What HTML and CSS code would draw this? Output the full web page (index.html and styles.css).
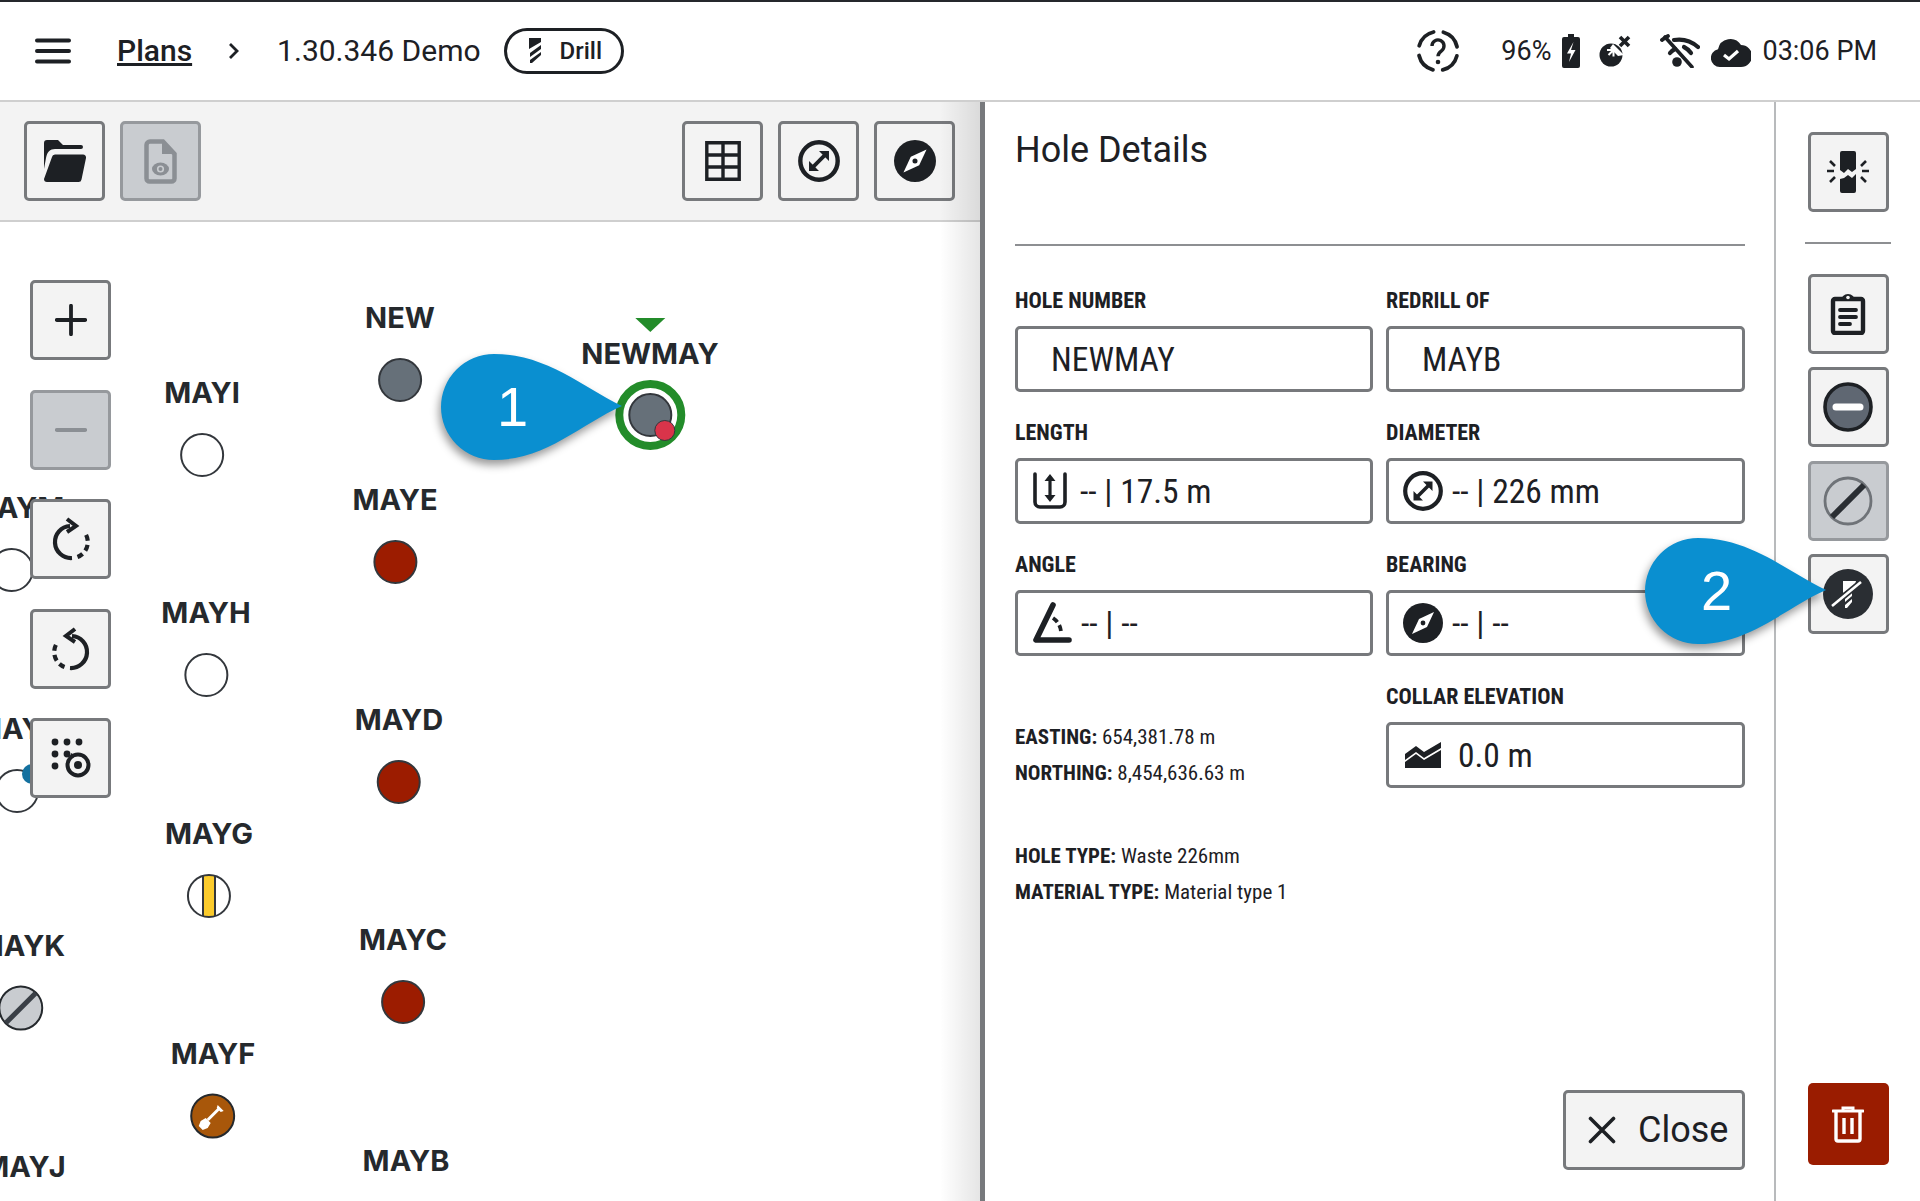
FILE: index.html
```html
<!DOCTYPE html>
<html lang="en">
<head>
    <meta charset="UTF-8">
    <meta name="viewport" content="width=device-width, initial-scale=1.0">
    <title>Hole Details</title>
    <link rel="stylesheet" href="styles.css">
</head>
<body>
    <svg class="defs" width="0" height="0">
        <symbol id="i-diameter" viewBox="0 0 40 40">
            <circle cx="20" cy="20" r="17.8" fill="none" stroke="currentColor" stroke-width="4.200"/>
            <path d="M13.5 26.5L26.5 13.5" stroke="currentColor" stroke-width="3.600" fill="none"/>
            <path d="M20 10.500h9.500V20zM20 29.500h-9.500V20z" fill="currentColor"/>
        </symbol>
        <symbol id="i-compass" viewBox="0 0 40 40">
            <circle cx="20" cy="20" r="20" fill="currentColor"/>
            <path d="M31 9L24 24L9 31L16 16z" fill="#fff"/>
            <circle cx="20" cy="20" r="2.400" fill="currentColor"/>
        </symbol>
    </svg>

    <header class="topbar">
        <svg class="menu-icon" viewBox="0 0 36 26"><path d="M2 2.500h32M2 13h32M2 23.500h32" stroke="#1d2024" stroke-width="4" stroke-linecap="round"/></svg>
        <a class="crumb-link">Plans</a>
        <svg class="crumb-sep" viewBox="0 0 12 18"><path d="M2 2l7 7-7 7" fill="none" stroke="#1d2024" stroke-width="2.800"/></svg>
        <span class="crumb-text">1.30.346 Demo</span>
        <span class="pill">
            <svg viewBox="0 0 16 28" width="16" height="28"><path d="M2 1h12v4L2 12zM14 8v4L3 20v-4zM14 15v3L5 26H3v-3z" fill="#1d2024"/></svg>
            Drill
        </span>
        <div class="status">
            <svg class="st-help" viewBox="0 0 44 44" width="44" height="44">
                <circle cx="22" cy="22" r="19.500" fill="none" stroke="#1d2024" stroke-width="3.800" stroke-dasharray="20.600 10" stroke-dashoffset="-5" stroke-linecap="round"/>
                <path d="M16 17a6 6 0 1 1 9.500 4.800c-2.300 1.600-3.500 2.700-3.500 5.500" fill="none" stroke="#1d2024" stroke-width="3.400"/>
                <circle cx="22" cy="33" r="2.300" fill="#1d2024"/>
            </svg>
            <span class="st-pct">96%</span>
            <svg class="st-batt" viewBox="0 0 18 34" width="18" height="34"><path d="M6 0h6v3h4a2 2 0 0 1 2 2v27a2 2 0 0 1-2 2H2a2 2 0 0 1-2-2V5a2 2 0 0 1 2-2h4z" fill="#1d2024"/><path d="M11.500 8L5 19.500h4L7 28l6.500-12H9z" fill="#fff"/></svg>
            <svg class="st-sat" viewBox="0 0 32 32" width="32" height="32">
                <circle cx="12" cy="20" r="11.500" fill="#1d2024"/>
                <path d="M14 9l11 11-6 1-8-8z" fill="#fff"/>
                <path d="M8 15h6.500v6.500M14.500 15l-5 5" fill="none" stroke="#fff" stroke-width="2"/>
                <path d="M21 2l9 9M30 2l-9 9" stroke="#1d2024" stroke-width="3.600"/>
            </svg>
            <svg class="st-wifi" viewBox="0 0 40 34" width="40" height="34">
                <path d="M14 6a29 29 0 0 1 24 7" fill="none" stroke="#1d2024" stroke-width="4.200" stroke-linecap="round"/>
                <path d="M24 13a19 19 0 0 1 7 6" fill="none" stroke="#1d2024" stroke-width="4.200" stroke-linecap="round"/>
                <path d="M10 19a15 15 0 0 1 5-4" fill="none" stroke="#1d2024" stroke-width="4.200" stroke-linecap="round"/>
                <path d="M2 6a30 30 0 0 1 6-4" fill="none" stroke="#1d2024" stroke-width="3.800" stroke-linecap="round"/>
                <path d="M5 3l27 30" fill="none" stroke="#1d2024" stroke-width="3.600" stroke-linecap="round"/>
                <circle cx="17" cy="28" r="4.800" fill="#1d2024"/>
            </svg>
            <svg class="st-cloud" viewBox="0 0 40 32" width="40" height="32">
                <path d="M9 32a9 9 0 0 1-2-17.800A12.500 12.500 0 0 1 30 10a11 11 0 0 1 0 22z" fill="#1d2024"/>
                <path d="M13 20l5 4 9-8" fill="none" stroke="#fff" stroke-width="3.200"/>
            </svg>
            <span class="st-time">03:06 PM</span>
        </div>
    </header>

    <main class="layout">
        <section class="plan-pane">
            <div class="toolbar">
                <button class="icon-btn">
                    <svg viewBox="0 0 42 44" width="42" height="44">
                        <path d="M0 4a3 3 0 0 1 3-3h11l5 5h18a2 2 0 0 1 0 4H11C6 10 3 13 2 19L0 30z" fill="#1d2024"/>
                        <path d="M8 18a3 3 0 0 1 3-2.500h28a3 3 0 0 1 3 3.500l-4.500 21.500a3 3 0 0 1-3 2.500H3a3 3 0 0 1-3-3z" fill="#1d2024"/>
                    </svg>
                </button>
                <button class="icon-btn is-disabled">
                    <svg viewBox="0 0 33 45" width="33" height="45">
                        <path d="M6 2.500h13L30.500 15v24.500a3 3 0 0 1-3 3H5.500a3 3 0 0 1-3-3V6a3.500 3.500 0 0 1 3.500-3.500z" fill="none" stroke="#8b8f94" stroke-width="4.500"/>
                        <path d="M18 2l13 13H18z" fill="#8b8f94"/>
                        <ellipse cx="16.500" cy="30" rx="8.500" ry="6.500" fill="#8b8f94"/>
                        <circle cx="16.500" cy="30" r="2.800" fill="none" stroke="#c9ccd0" stroke-width="1.600"/>
                    </svg>
                </button>
                <span class="toolbar-space"></span>
                <button class="icon-btn">
                    <svg viewBox="0 0 36 40" width="36" height="40"><path d="M1.800 1.800h32.400v36.400H1.800zM18 1.800v36.400M1.800 14h32.400M1.800 26h32.400" fill="none" stroke="#1d2024" stroke-width="3.400"/></svg>
                </button>
                <button class="icon-btn"><svg width="42" height="42"><use href="#i-diameter"/></svg></button>
                <button class="icon-btn"><svg width="42" height="42"><use href="#i-compass"/></svg></button>
            </div>

            <div class="map">
                <div class="hole" style="left:400px;top:79px"><span>NEW</span><i class="dot dot-grey"></i></div>
                <div class="hole" style="left:202px;top:154px"><span>MAYI</span><i class="dot"></i></div>
                <div class="hole" style="left:395px;top:261px"><span>MAYE</span><i class="dot dot-red"></i></div>
                <div class="hole" style="left:206px;top:374px"><span>MAYH</span><i class="dot"></i></div>
                <div class="hole" style="left:399px;top:481px"><span>MAYD</span><i class="dot dot-red"></i></div>
                <div class="hole" style="left:209px;top:595px">
                    <span>MAYG</span>
                    <i class="dot dot-stripe"></i>
                </div>
                <div class="hole" style="left:403px;top:701px"><span>MAYC</span><i class="dot dot-red"></i></div>
                <div class="hole" style="left:213px;top:815px">
                    <span>MAYF</span>
                    <svg class="dot-svg" viewBox="0 0 46 46" width="46" height="46">
                        <circle cx="23" cy="23" r="21.500" fill="#a8570a" stroke="#25292d" stroke-width="2"/>
                        <path d="M18 27l11-11" stroke="#fff" stroke-width="3"/>
                        <path d="M28 12l6 6-3 1-4-4zM11 28l5-3 5 5-3 5-5 2-4-4z" fill="#fff"/>
                    </svg>
                </div>
                <div class="hole" style="left:406px;top:922px"><span>MAYB</span></div>
                <div class="hole" style="left:21px;top:707px">
                    <span>MAYK</span>
                    <svg class="dot-svg" viewBox="0 0 46 46" width="46" height="46">
                        <circle cx="23" cy="23" r="21.500" fill="#c9ccd0" stroke="#25292d" stroke-width="2"/>
                        <path d="M8 38L38 8" stroke="#3a3f46" stroke-width="5"/>
                    </svg>
                </div>
                <div class="hole" style="left:24px;top:928px"><span>MAYJ</span></div>
                <div class="hole" style="left:12px;top:269px"><span class="label-shift">MAYM</span><i class="dot"></i></div>
                <div class="hole" style="left:17px;top:490px"><span>MAYL</span><i class="dot"></i></div>
                <i class="blue-dot" style="left:22px;top:542px"></i>

                <div class="hole hole-current" style="left:650px;top:115px">
                    <b class="heading-mark"></b>
                    <span>NEWMAY</span>
                    <i class="ring"><i class="dot dot-grey"></i><i class="alert-dot"></i></i>
                </div>

                <div class="map-controls">
                    <button class="icon-btn">
                        <svg viewBox="0 0 32 32" width="32" height="32"><path d="M1.800 16h28.400M16 1.800v28.400" stroke="#1d2024" stroke-width="3.800" stroke-linecap="round"/></svg>
                    </button>
                    <button class="icon-btn is-disabled">
                        <svg viewBox="0 0 32 32" width="32" height="32"><path d="M1.800 16h28.400" stroke="#8b8f94" stroke-width="3.800" stroke-linecap="round"/></svg>
                    </button>
                    <button class="icon-btn">
                        <svg viewBox="0 0 40 44" width="40" height="44">
                            <path d="M19 9A16 16 0 0 0 21 41" fill="none" stroke="#1d2024" stroke-width="4.200"/>
                            <path d="M26.500 40A16 16 0 0 0 34 16" fill="none" stroke="#1d2024" stroke-width="4.200" stroke-dasharray="6 4.200"/>
                            <path d="M16 2l9 7-9 6" fill="none" stroke="#1d2024" stroke-width="4"/>
                        </svg>
                    </button>
                    <button class="icon-btn">
                        <svg viewBox="0 0 40 44" width="40" height="44">
                            <path d="M21 9A16 16 0 0 1 19 41" fill="none" stroke="#1d2024" stroke-width="4.200"/>
                            <path d="M13.500 40A16 16 0 0 1 6 16" fill="none" stroke="#1d2024" stroke-width="4.200" stroke-dasharray="6 4.200"/>
                            <path d="M24 2l-9 7 9 6" fill="none" stroke="#1d2024" stroke-width="4"/>
                        </svg>
                    </button>
                    <button class="icon-btn">
                        <svg viewBox="0 0 40 40" width="40" height="40">
                            <g fill="#1d2024">
                                <circle cx="4" cy="4" r="3.400"/><circle cx="16" cy="4" r="3.400"/><circle cx="28" cy="4" r="3.400"/>
                                <circle cx="4" cy="16" r="3.400"/><circle cx="16" cy="16" r="3.400"/>
                                <circle cx="4" cy="28" r="3.400"/>
                            </g>
                            <circle cx="27" cy="27" r="10.500" fill="none" stroke="#1d2024" stroke-width="4"/>
                            <circle cx="27" cy="27" r="4" fill="#1d2024"/>
                            <path d="M20 15l5 3-6 3z" fill="#1d2024"/>
                        </svg>
                    </button>
                </div>
            </div>
        </section>

        <section class="details">
            <h1>Hole Details</h1>
            <div class="form-grid">
                <div class="field">
                    <label>HOLE NUMBER</label>
                    <div class="input input-plain">NEWMAY</div>
                </div>
                <div class="field">
                    <label>REDRILL OF</label>
                    <div class="input input-plain">MAYB</div>
                </div>
                <div class="field">
                    <label>LENGTH</label>
                    <div class="input">
                        <svg class="icon-length" viewBox="0 0 36 38" width="36" height="38">
                            <path d="M3 2v28a5 5 0 0 0 5 5h20a5 5 0 0 0 5-5V2" fill="none" stroke="#1d2024" stroke-width="3.600" stroke-linecap="round"/>
                            <path d="M18 7v18" stroke="#1d2024" stroke-width="3.200"/>
                            <path d="M18 2l5.500 7h-11zM18 30l5.500-7h-11z" fill="#1d2024"/>
                        </svg>
                        -- | 17.5 m
                    </div>
                </div>
                <div class="field">
                    <label>DIAMETER</label>
                    <div class="input"><svg width="40" height="40"><use href="#i-diameter"/></svg>-- | 226 mm</div>
                </div>
                <div class="field">
                    <label>ANGLE</label>
                    <div class="input">
                        <svg viewBox="0 0 40 42" width="40" height="42">
                            <path d="M21 3L4 38h33" fill="none" stroke="#1d2024" stroke-width="5.600" stroke-linecap="round" stroke-linejoin="round"/>
                            <path d="M21 16a18 18 0 0 1 8 16" fill="none" stroke="#1d2024" stroke-width="3.800" stroke-dasharray="6 3.500"/>
                        </svg>
                        -- | --
                    </div>
                </div>
                <div class="field">
                    <label>BEARING</label>
                    <div class="input"><svg width="40" height="40"><use href="#i-compass"/></svg>-- | --</div>
                </div>
                <div class="field field-info">
                    <p><b>EASTING:</b> 654,381.78 m</p>
                    <p><b>NORTHING:</b> 8,454,636.63 m</p>
                </div>
                <div class="field">
                    <label>COLLAR ELEVATION</label>
                    <div class="input input-elev">
                        <svg viewBox="0 0 38 26" width="38" height="26">
                            <path d="M1 12l11-8 8 6L37 0v6L20 16l-8-6-11 8z" fill="#1d2024"/>
                            <path d="M1 20l11-8 8 6 17-10v18H1z" fill="#1d2024"/>
                        </svg>
                        0.0 m
                    </div>
                </div>
            </div>
            <div class="info">
                <p><b>HOLE TYPE:</b> Waste 226mm</p>
                <p><b>MATERIAL TYPE:</b> Material type 1</p>
            </div>
            <div class="details-foot">
                <button class="close-btn">
                    <svg viewBox="0 0 28 28" width="28" height="28"><path d="M2.500 2.500l23 23M25.500 2.500l-23 23" stroke="#1d2024" stroke-width="3.600" stroke-linecap="round"/></svg>
                    Close
                </button>
            </div>
        </section>

        <aside class="actions">
            <button class="icon-btn">
                <svg viewBox="0 0 42 42" width="42" height="42">
                    <path d="M13 2a2 2 0 0 1 2-2h12a2 2 0 0 1 2 2v16l-4 3-4-3-4 4-4-3z" fill="#1d2024"/>
                    <path d="M13 28l4-1 4-3 4 3 4-4v17a2 2 0 0 1-2 2H15a2 2 0 0 1-2-2z" fill="#1d2024"/>
                    <path d="M3 10l5 5M39 10l-5 5M0 20h7M35 20h7M3 31l5-5M39 31l-5-5" stroke="#1d2024" stroke-width="2.600"/>
                </svg>
            </button>
            <hr class="actions-rule">
            <button class="icon-btn">
                <svg viewBox="0 0 36 42" width="36" height="42">
                    <path d="M5 6h26a2 2 0 0 1 2 2v30a2 2 0 0 1-2 2H5a2 2 0 0 1-2-2V8a2 2 0 0 1 2-2z" fill="none" stroke="#1d2024" stroke-width="4.400"/>
                    <path d="M11 8a7 7 0 0 1 14 0z" fill="#1d2024"/>
                    <circle cx="18" cy="4.500" r="1.800" fill="#f3f3f3"/>
                    <path d="M10 17h16M10 24h16M10 31h10" stroke="#1d2024" stroke-width="3.800" stroke-linecap="round"/>
                </svg>
            </button>
            <button class="icon-btn">
                <svg viewBox="0 0 50 50" width="50" height="50">
                    <circle cx="25" cy="25" r="23" fill="#5f6772" stroke="#1d2024" stroke-width="3.600"/>
                    <path d="M13 25h24" stroke="#fff" stroke-width="7" stroke-linecap="round"/>
                </svg>
            </button>
            <button class="icon-btn is-disabled">
                <svg viewBox="0 0 50 50" width="50" height="50">
                    <circle cx="25" cy="25" r="23" fill="none" stroke="#6f7378" stroke-width="2.800"/>
                    <path d="M9 41L41 9" stroke="#2a2e33" stroke-width="6"/>
                </svg>
            </button>
            <button class="icon-btn">
                <svg viewBox="0 0 50 50" width="50" height="50">
                    <circle cx="25" cy="25" r="25" fill="#2a2e33"/>
                    <path d="M20 12h13l-1 4-12 8zM29 22v5l-7 6v-5zM29 30v3l-5 6h-2v-3z" fill="#fff"/>
                    <path d="M9 37L38 13" stroke="#2a2e33" stroke-width="6"/>
                    <path d="M9 37L38 13" stroke="#fff" stroke-width="2.600"/>
                </svg>
            </button>
            <button class="delete-btn">
                <svg viewBox="0 0 32 38" width="32" height="38">
                    <path d="M1 6h30" stroke="#fff" stroke-width="3.200" stroke-linecap="round"/>
                    <path d="M11 5V3h10v2" fill="none" stroke="#fff" stroke-width="3"/>
                    <path d="M4 7v27a2 2 0 0 0 2 2h20a2 2 0 0 0 2-2V7" fill="none" stroke="#fff" stroke-width="3.400"/>
                    <path d="M12 13v16M20 13v16" stroke="#fff" stroke-width="3.400"/>
                </svg>
            </button>
        </aside>
    </main>

    <div class="callout callout-one">
        <svg viewBox="0 0 181 106" width="181" height="106"><path d="M181 52C140 70 105 106 53 106A53 53 0 0 1 53 0C105 0 140 32 181 52z" fill="#0a8fd0"/></svg>
        <span>1</span>
    </div>
    <div class="callout callout-two">
        <svg viewBox="0 0 181 106" width="181" height="106"><path d="M181 52C140 70 105 106 53 106A53 53 0 0 1 53 0C105 0 140 32 181 52z" fill="#0a8fd0"/></svg>
        <span>2</span>
    </div>
</body>
</html>
```

FILE: styles.css
```css
* {
    box-sizing: border-box;
}

body {
    margin: 0;
    height: 100vh;
    overflow: hidden;
    position: relative;
    display: flex;
    flex-direction: column;
    font-family: Roboto, "Liberation Sans", sans-serif;
    color: #1d2024;
    background-color: #fff;
}

.defs {
    position: absolute;
}

/* Barra superior */
.topbar {
    height: 102px;
    flex: none;
    display: flex;
    align-items: center;
    padding: 0 43px 0 35px;
    border-top: 2px solid #25282c;
    border-bottom: 2px solid #cfcfcf;
}

.menu-icon {
    width: 36px;
    height: 26px;
    margin-right: 46px;
}

.crumb-link {
    margin-bottom: 2px;
    font-size: 30px;
    font-weight: 500;
    text-decoration: underline;
    text-decoration-thickness: 2.5px;
}

.crumb-sep {
    width: 12px;
    height: 18px;
    margin: 0 37px 0 36px;
}

.crumb-text {
    margin-bottom: 2px;
    font-size: 30px;
    font-weight: 400;
}

.pill {
    display: flex;
    align-items: center;
    gap: 17px;
    height: 46px;
    margin-left: 23px;
    padding: 0 19px 0 20px;
    border: 3px solid #1d2024;
    border-radius: 23px;
    font-size: 24px;
    font-weight: 500;
}

.status {
    margin-left: auto;
    margin-bottom: 1px;
    display: flex;
    align-items: center;
    font-size: 27px;
}

.st-pct {
    margin-left: 41px;
}

.st-batt {
    margin-left: 11px;
}

.st-sat {
    margin-left: 19px;
}

.st-wifi {
    margin-left: 29px;
}

.st-cloud {
    margin-left: 11px;
}

.st-time {
    margin-left: 11px;
}

/* Colunas principais */
.layout {
    flex: 1;
    display: flex;
    min-height: 0;
}

.plan-pane {
    width: 985px;
    flex: none;
    display: flex;
    flex-direction: column;
    border-right: 5px solid #77797c;
    position: relative;
    min-height: 0;
}

.plan-pane::after {
    content: "";
    position: absolute;
    top: 0;
    right: 0;
    bottom: 0;
    width: 40px;
    background: linear-gradient(to right, rgba(0, 0, 0, 0), rgba(0, 0, 0, 0.1));
    pointer-events: none;
}

.toolbar {
    height: 120px;
    flex: none;
    display: flex;
    align-items: center;
    gap: 15px;
    padding: 0 25px 0 24px;
    background-color: #f3f3f3;
    border-bottom: 2px solid #cfcfcf;
}

.toolbar-space {
    flex: 1;
}

.icon-btn {
    width: 81px;
    height: 80px;
    flex: none;
    display: flex;
    align-items: center;
    justify-content: center;
    padding: 0;
    background-color: #f3f3f3;
    color: #1d2024;
    border: 3px solid #77797c;
    border-radius: 5px;
}

.icon-btn.is-disabled {
    background-color: #c9ccd0;
    border-color: #96999d;
}

/* Mapa do plano */
.map {
    flex: 1;
    position: relative;
    overflow: hidden;
}

.map-controls {
    position: absolute;
    left: 30px;
    top: 58px;
    display: flex;
    flex-direction: column;
    gap: 29.5px;
}

.hole {
    position: absolute;
    display: flex;
    flex-direction: column;
    align-items: center;
    gap: 23px;
    transform: translateX(-50%);
}

.hole span {
    font-family: Inter, "Liberation Sans", sans-serif;
    font-size: 29px;
    font-weight: 700;
    line-height: 34px;
    color: #25292d;
    white-space: nowrap;
}

.hole span.label-shift {
    margin-left: 10px;
}

.dot {
    display: block;
    width: 44px;
    height: 44px;
    border-radius: 50%;
    background-color: #fff;
    border: 2px solid #33373c;
}

.dot-svg {
    display: block;
    margin: -1px;
}

.dot-grey {
    background-color: #667079;
}

.dot-red {
    background-color: #9c1c00;
}

.dot-stripe {
    background: linear-gradient(to right, #fff 32%, #33373c 32%, #33373c 37%, #fbcb2c 37%, #fbcb2c 63%, #33373c 63%, #33373c 68%, #fff 68%);
}

.blue-dot {
    position: absolute;
    width: 20px;
    height: 20px;
    border-radius: 50%;
    background-color: #14719f;
}

.hole-current {
    gap: 0;
}

.heading-mark {
    position: absolute;
    top: -19px;
    width: 0;
    height: 0;
    border-left: 15px solid transparent;
    border-right: 15px solid transparent;
    border-top: 14px solid #238c2a;
}

.ring {
    position: relative;
    display: flex;
    align-items: center;
    justify-content: center;
    width: 70px;
    height: 70px;
    margin-top: 9px;
    border-radius: 50%;
    background-color: #fff;
    border: 8px solid #238c2a;
}

.alert-dot {
    position: absolute;
    right: 2px;
    bottom: 1px;
    width: 21px;
    height: 21px;
    border-radius: 50%;
    background-color: #d9344a;
    border: 1.5px solid #33373c;
}

/* Painel de detalhes */
.details {
    flex: 1;
    display: flex;
    flex-direction: column;
    padding: 0 29px 31px 30px;
    position: relative;
}

.details h1 {
    height: 144px;
    margin: 0 0 43px;
    padding-top: 28px;
    font-size: 36px;
    font-weight: 400;
    line-height: 40px;
    border-bottom: 2px solid #8d8f92;
}

.form-grid {
    display: grid;
    grid-template-columns: 358px 359px;
    column-gap: 13px;
    row-gap: 29px;
}

.field label {
    display: block;
    height: 37px;
    font-size: 22px;
    font-weight: 700;
    font-stretch: 75%;
    line-height: 24px;
}

.input {
    height: 66px;
    display: flex;
    align-items: center;
    gap: 9px;
    padding-left: 14px;
    font-size: 33.5px;
    font-stretch: 85%;
    border: 3px solid #77797c;
    border-radius: 5px;
}

.input .icon-length {
    margin-right: 3px;
}

.input-plain {
    padding-left: 33px;
}

.input-elev {
    padding-left: 15px;
    gap: 16px;
}

.field-info {
    padding-top: 42px;
}

.field-info p,
.info p {
    margin: 0 0 16px;
    font-size: 21px;
    font-stretch: 80%;
    line-height: 20px;
}

.info {
    margin-top: 47px;
}

.details-foot {
    margin-top: auto;
    display: flex;
    justify-content: flex-end;
}

.close-btn {
    width: 182px;
    height: 80px;
    display: flex;
    align-items: center;
    gap: 22px;
    padding: 0 0 0 22px;
    font-family: inherit;
    font-size: 36px;
    color: #1d2024;
    background-color: #f3f3f3;
    border: 3px solid #77797c;
    border-radius: 5px;
}

/* Coluna de acoes */
.actions {
    width: 146px;
    flex: none;
    display: flex;
    flex-direction: column;
    align-items: center;
    padding: 30px 0 36px;
    border-left: 2px solid #b8babc;
}

.actions .icon-btn {
    margin-bottom: 13.5px;
}

.actions-rule {
    width: 86px;
    margin: 16px 0 30px;
    border: none;
    border-top: 2px solid #8d8f92;
}

.delete-btn {
    width: 81px;
    height: 82px;
    margin-top: auto;
    display: flex;
    align-items: center;
    justify-content: center;
    padding: 0;
    border: none;
    border-radius: 5px;
    background-color: #9a1c00;
}

/* Marcadores numerados */
.callout {
    position: absolute;
    width: 181px;
    height: 106px;
    filter: drop-shadow(-2px 5px 4px rgba(0, 0, 0, 0.4));
}

.callout svg {
    display: block;
}

.callout span {
    position: absolute;
    left: 56px;
    top: 0;
    width: 30px;
    text-align: center;
    font-family: "Liberation Sans", sans-serif;
    font-size: 56px;
    line-height: 106px;
    color: #fff;
}

.callout-one {
    left: 441px;
    top: 354px;
}

.callout-two {
    left: 1645px;
    top: 538px;
}
```
